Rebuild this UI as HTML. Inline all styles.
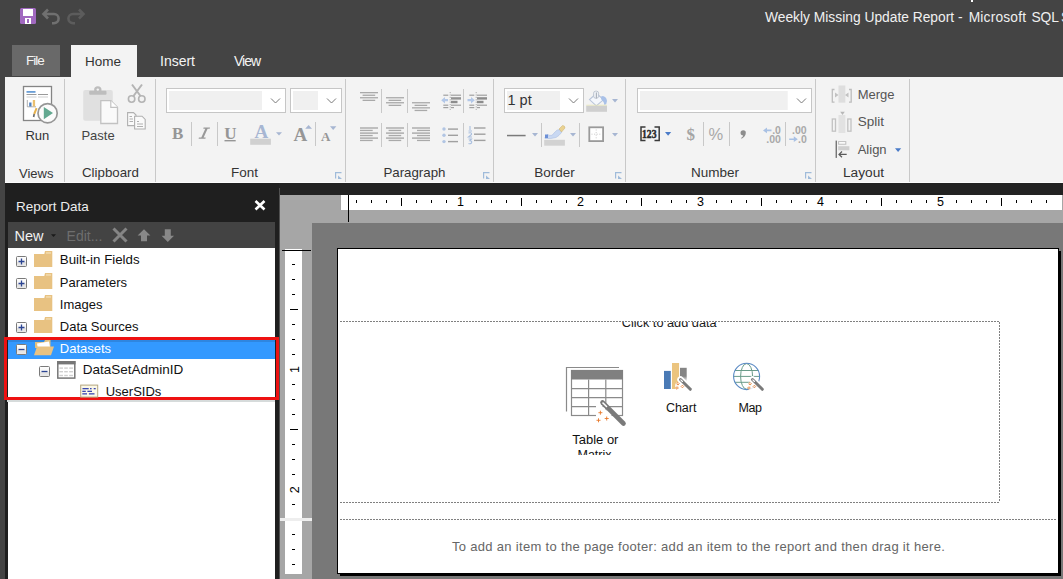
<!DOCTYPE html>
<html><head><meta charset="utf-8">
<style>
*{margin:0;padding:0;box-sizing:border-box}
html,body{width:1063px;height:579px;overflow:hidden;background:#444;font-family:"Liberation Sans",sans-serif}
.a{position:absolute}
.t{position:absolute;white-space:nowrap;line-height:1}
svg{position:absolute;overflow:visible}
</style></head><body>
<!-- title bar -->
<div class="a" style="left:0;top:0;width:1063px;height:77px;background:#444"></div>
<div class="t" style="left:765px;top:11px;font-size:13.8px;color:#f0f0f0">Weekly Missing Update Report</div>
<div class="t" style="left:958px;top:11px;font-size:13.8px;color:#f0f0f0">-</div>
<div class="t" style="left:968.7px;top:11px;font-size:13.8px;color:#f0f0f0;letter-spacing:0.17px">Microsoft</div>
<div class="t" style="left:1031.4px;top:11px;font-size:13.8px;color:#f0f0f0">SQL</div>
<div class="t" style="left:1061px;top:11px;font-size:13.8px;color:#f0f0f0">Server</div>
<div class="a" style="left:971px;top:0;width:2px;height:1.5px;background:#fff"></div>

<!-- tabs -->
<div class="a" style="left:12px;top:45px;width:48px;height:31px;background:#696969"></div>
<div class="t" style="left:26px;top:54px;font-size:13.5px;color:#f4f4f4;letter-spacing:-1px">File</div>
<div class="a" style="left:71px;top:45px;width:66px;height:33px;background:#f3f3f3"></div>
<div class="t" style="left:85px;top:54.8px;font-size:13.5px;color:#333">Home</div>
<div class="t" style="left:160px;top:54px;font-size:14px;color:#f4f4f4">Insert</div>
<div class="t" style="left:234px;top:54px;font-size:14px;color:#f4f4f4;letter-spacing:-1px">View</div>

<!-- ribbon -->
<div class="a" style="left:5px;top:77px;width:1058px;height:106px;background:#f3f3f3"></div>

<div class="a" style="left:64px;top:79px;width:1px;height:103px;background:#c8c8c8"></div>
<div class="a" style="left:155px;top:79px;width:1px;height:103px;background:#c8c8c8"></div>
<div class="a" style="left:345px;top:79px;width:1px;height:103px;background:#c8c8c8"></div>
<div class="a" style="left:493px;top:79px;width:1px;height:103px;background:#c8c8c8"></div>
<div class="a" style="left:625px;top:79px;width:1px;height:103px;background:#c8c8c8"></div>
<div class="a" style="left:815px;top:79px;width:1px;height:103px;background:#c8c8c8"></div>
<div class="a" style="left:909px;top:79px;width:1px;height:103px;background:#c8c8c8"></div>
<div class="a" style="left:5px;top:182px;width:1058px;height:1px;background:#fbfbfb"></div>
<div class="t" style="left:19px;top:166.7px;font-size:13px;color:#333;">Views</div>
<div class="t" style="left:82px;top:166.4px;font-size:13.3px;color:#333;">Clipboard</div>
<div class="t" style="left:231px;top:166.3px;font-size:13.5px;color:#333;">Font</div>
<div class="t" style="left:383.4px;top:165.7px;font-size:13.3px;color:#333;">Paragraph</div>
<div class="t" style="left:534.3px;top:166.0px;font-size:13.5px;color:#333;">Border</div>
<div class="t" style="left:691px;top:166.3px;font-size:13.5px;color:#333;">Number</div>
<div class="t" style="left:843px;top:165.8px;font-size:13.7px;color:#333;">Layout</div>
<div class="t" style="left:25.4px;top:129.0px;font-size:13px;color:#333;">Run</div>
<div class="t" style="left:81.4px;top:129.0px;font-size:13px;color:#444;">Paste</div>
<div class="t" style="left:857.7px;top:87.7px;font-size:13px;color:#555;">Merge</div>
<div class="t" style="left:857.7px;top:115.0px;font-size:13.5px;color:#555;">Split</div>
<div class="t" style="left:857.7px;top:143.0px;font-size:13px;color:#555;">Align</div>
<svg width="1063" height="579" style="left:0;top:0" viewBox="0 0 1063 579">
<!-- quick access -->
<rect x="20" y="8" width="16" height="16" rx="1.5" fill="#a169c0"/>
<rect x="23" y="9" width="10" height="7" fill="#fff"/>
<rect x="25" y="18" width="6" height="6" fill="#fff"/>
<rect x="27" y="19" width="2" height="4" fill="#a169c0"/>
<path d="M48 9.5 L43.5 14 L48 18.5 M44 14 H54 A4.6 4.6 0 0 1 54 23.2 H52" fill="none" stroke="#707070" stroke-width="2.6"/>
<path d="M79 9.5 L83.5 14 L79 18.5 M83 14 H73 A4.6 4.6 0 0 0 73 23.2 H75" fill="none" stroke="#5c5c5c" stroke-width="2.6"/>

<!-- Run icon -->
<rect x="23.5" y="86.5" width="28" height="34" fill="#fff" stroke="#858585" stroke-width="1.3"/>
<rect x="26.5" y="91" width="9" height="1.8" fill="#6a9ed6"/>
<rect x="26.5" y="94" width="10" height="1" fill="#9a9a9a"/>
<rect x="38" y="94" width="10" height="1" fill="#9a9a9a"/>
<rect x="26.5" y="96.5" width="10" height="1" fill="#cfcfcf"/>
<rect x="38" y="96.5" width="10" height="1" fill="#cfcfcf"/>
<path d="M27.3 100 V106.8 H36" fill="none" stroke="#999" stroke-width="0.8"/>
<rect x="29.2" y="102.5" width="2.3" height="4" fill="#4f80c0"/>
<rect x="32.8" y="100" width="2.3" height="6.5" fill="#ebc070"/>
<path d="M36.6 108.2 L34.2 114" stroke="#e6b24e" stroke-width="2"/><path d="M34.2 114 L33.6 117" stroke="#666" stroke-width="1.6"/>
<circle cx="47.6" cy="113.2" r="9.6" fill="#fbfbfb" stroke="#969696" stroke-width="1.7"/>
<path d="M43.8 107 L53 113 L43.8 119.2 Z" fill="#62a890"/>

<!-- Paste icon -->
<rect x="83.2" y="89.9" width="29.6" height="30.9" rx="2" fill="#e0e0e0"/>
<rect x="89.2" y="90.8" width="17.3" height="4" rx="1" fill="#bdbdbd"/>
<circle cx="97.8" cy="90" r="3.7" fill="#bdbdbd"/>
<circle cx="97.8" cy="89.6" r="1.2" fill="#f3f3f3"/>
<path d="M100.8 100.7 H110.8 L117.5 107.3 V123.5 H100.8 Z" fill="#fafafa" stroke="#c2c2c2" stroke-width="1.3"/>
<path d="M110.8 100.7 V107.3 H117.5" fill="#fff" stroke="#c2c2c2" stroke-width="1.2"/>
<!-- scissors -->
<path d="M132 84.5 L140.5 96 M142 84.5 L133.5 96" fill="none" stroke="#b4b4b4" stroke-width="2"/>
<circle cx="131.6" cy="99" r="3.2" fill="none" stroke="#b4b4b4" stroke-width="1.6"/>
<circle cx="141.8" cy="99" r="3.2" fill="none" stroke="#b4b4b4" stroke-width="1.6"/>
<!-- copy -->
<path d="M127.6 112.6 H133.5 L136 115 V125.6 H127.6 Z" fill="#fafafa" stroke="#b0b0b0" stroke-width="1.1"/>
<path d="M129.5 116.5 H132 M129.5 119 H133 M129.5 121.5 H133" stroke="#b0b0b0" stroke-width="1"/>
<path d="M134.6 116.2 H142 L145.2 119.4 V129 H134.6 Z" fill="#fafafa" stroke="#b0b0b0" stroke-width="1.1"/>
<path d="M137 121.5 H139 M137 124 H143 M137 126.5 H143" stroke="#b0b0b0" stroke-width="1"/>

<!-- Font dropdowns -->
<rect x="166.5" y="88.5" width="119" height="24" fill="#fff" stroke="#c6c6c6"/>
<rect x="169" y="91" width="93" height="19" fill="#f0f0f0"/>
<path d="M271 98.5 L275.5 103 L280 98.5" fill="none" stroke="#7a7a7a" stroke-width="1"/>
<rect x="290.5" y="88.5" width="51" height="24" fill="#fff" stroke="#c6c6c6"/>
<rect x="293" y="91" width="25" height="19" fill="#f0f0f0"/>
<path d="M327 98.5 L331.5 103 L336 98.5" fill="none" stroke="#7a7a7a" stroke-width="1"/>
<g fill="#c8c8c8">
<rect x="191" y="122" width="1" height="24"/>
<rect x="217" y="122" width="1" height="24"/>
<rect x="315" y="122" width="1" height="24"/>
</g>
<g font-family="Liberation Serif" font-weight="bold" fill="#969696">
<text x="172" y="138.8" font-size="17">B</text>

<text x="224.2" y="138.8" font-size="17">U</text>
<text x="293.5" y="141" font-size="19">A</text>
<text x="321" y="141" font-size="13">A</text>
</g>
<rect x="224.5" y="140" width="11.2" height="1.4" fill="#969696"/>
<path d="M203.6 127.4 H210 L209.7 128.7 H207.6 L203.6 137.5 H205.7 L205.4 138.8 H198.6 L198.9 137.5 H201.3 L205.3 128.7 H203.3 Z" fill="#999"/>
<text x="254.5" y="137.8" font-family="Liberation Serif" font-weight="bold" font-size="19" fill="#a7b6d2">A</text>
<rect x="250.2" y="138.7" width="20.7" height="6.1" fill="#d0d0d0"/>
<path d="M276 132.2 H282 L279 135.4 Z" fill="#a7b6d2"/>
<path d="M305.2 128.8 L308.6 125 L312 128.8 Z" fill="#a7b6d2"/>
<path d="M330 126.3 H336.4 L333.2 130 Z" fill="#a7b6d2"/>
<!-- launchers -->
<g fill="none" stroke="#9fbbda" stroke-width="1.2">
<path d="M335.6 178.5 V172.6 H341.5"/><path d="M483.6 178.5 V172.6 H489.5"/><path d="M615.6 178.5 V172.6 H621.5"/><path d="M805.6 178.5 V172.6 H811.5"/>
</g>
<g fill="#9fbbda">
<path d="M338 175.5 L342 179 H338 Z"/><path d="M486 175.5 L490 179 H486 Z"/><path d="M618 175.5 L622 179 H618 Z"/><path d="M808 175.5 L812 179 H808 Z"/>
</g>
</svg>

<svg width="1063" height="579" style="left:0;top:0" viewBox="0 0 1063 579">
<!-- paragraph -->
<g fill="#c8c8c8">
<rect x="381" y="89" width="1" height="24"/><rect x="407" y="89" width="1" height="24"/><rect x="463" y="89" width="1" height="24"/>
<rect x="381" y="123" width="1" height="24"/><rect x="407" y="123" width="1" height="24"/><rect x="463" y="123" width="1" height="24"/>
<rect x="541" y="123" width="1" height="24"/><rect x="579" y="123" width="1" height="24"/>
<rect x="703" y="122" width="1" height="24"/><rect x="729" y="122" width="1" height="24"/><rect x="785" y="122" width="1" height="24"/>
</g>
<g fill="#a9a9a9">
<rect x="360" y="92" width="18" height="1.3"/><rect x="362.6" y="94.6" width="12.6" height="1.3"/><rect x="360" y="97.1" width="18" height="1.3"/><rect x="362.6" y="99.7" width="12.6" height="1.3"/>
<rect x="386" y="97.1" width="18" height="1.3"/><rect x="388.6" y="99.7" width="12.6" height="1.3"/><rect x="386" y="102.1" width="18" height="1.3"/><rect x="388.6" y="104.7" width="12.6" height="1.3"/>
<rect x="412" y="102.1" width="18" height="1.3"/><rect x="414.6" y="104.7" width="12.6" height="1.3"/><rect x="412" y="107.2" width="18" height="1.3"/><rect x="414.6" y="109.8" width="12.6" height="1.3"/>
<!-- row2 -->
<rect x="360" y="127.3" width="18" height="1.4"/><rect x="360" y="129.8" width="12.7" height="1.3"/><rect x="360" y="132.4" width="18" height="1.4"/><rect x="360" y="134.9" width="12.7" height="1.3"/><rect x="360" y="137.4" width="18" height="1.4"/><rect x="360" y="139.8" width="12.7" height="1.3"/>
<rect x="386" y="127.3" width="18" height="1.4"/><rect x="388.6" y="129.8" width="12.6" height="1.3"/><rect x="386" y="132.4" width="18" height="1.4"/><rect x="388.6" y="134.9" width="12.6" height="1.3"/><rect x="386" y="137.4" width="18" height="1.4"/><rect x="388.6" y="139.8" width="12.6" height="1.3"/>
<rect x="412" y="127.3" width="18" height="1.4"/><rect x="417" y="129.8" width="13" height="1.3"/><rect x="412" y="132.4" width="18" height="1.4"/><rect x="417" y="134.9" width="13" height="1.3"/><rect x="412" y="137.4" width="18" height="1.4"/><rect x="417" y="139.8" width="13" height="1.3"/>
</g>
<!-- indent icons -->
<g>
<path d="M450.2 92 V111" stroke="#999" stroke-width="0.8" stroke-dasharray="1.2 1.2"/>
<rect x="443.3" y="94.6" width="5" height="1.2" fill="#a0a0a0"/><rect x="443.3" y="104.6" width="5" height="1.2" fill="#a0a0a0"/><rect x="443.3" y="107" width="5" height="1.2" fill="#a0a0a0"/>
<rect x="451" y="94.6" width="10" height="1.2" fill="#a0a0a0"/><rect x="451" y="97.2" width="10" height="2.4" fill="#939393"/><rect x="451" y="100.8" width="6.5" height="2.4" fill="#8c8c8c"/><rect x="451" y="104.6" width="10" height="1.2" fill="#a0a0a0"/><rect x="451" y="107" width="3" height="1.2" fill="#a0a0a0"/>
<path d="M441.2 100.2 L445 97 V99.1 H448 V101.3 H445 V103.4 Z" fill="#b3c8e8"/>
<path d="M476.2 92 V111" stroke="#999" stroke-width="0.8" stroke-dasharray="1.2 1.2"/>
<rect x="469.3" y="94.6" width="5" height="1.2" fill="#a0a0a0"/><rect x="469.3" y="104.6" width="5" height="1.2" fill="#a0a0a0"/><rect x="469.3" y="107" width="5" height="1.2" fill="#a0a0a0"/>
<rect x="477" y="94.6" width="10" height="1.2" fill="#a0a0a0"/><rect x="477" y="97.2" width="10" height="2.4" fill="#8c8c8c"/><rect x="477" y="100.8" width="6.5" height="2.4" fill="#8c8c8c"/><rect x="477" y="104.6" width="10" height="1.2" fill="#a0a0a0"/><rect x="477" y="107" width="3" height="1.2" fill="#a0a0a0"/>
<path d="M474.8 100.2 L471 97 V99.1 H467.5 V101.3 H471 V103.4 Z" fill="#b3c8e8"/>
</g>
<!-- bullets & numbering -->
<g fill="#b1c5e3"><circle cx="444" cy="129" r="1.7"/><circle cx="444" cy="135.3" r="1.7"/><circle cx="444" cy="141.6" r="1.7"/></g>
<g fill="#a0a0a0"><rect x="448" y="128.4" width="10" height="1.4"/><rect x="448" y="134.6" width="10" height="1.4"/><rect x="448" y="140.9" width="10" height="1.4"/>
<rect x="474" y="127.3" width="11.5" height="1.4"/><rect x="474" y="133.5" width="11.5" height="1.4"/><rect x="474" y="139.7" width="11.5" height="1.4"/></g>
<g fill="none" stroke="#a9bfdf" stroke-width="1.1"><path d="M470 126 V130 M468.5 131 H472"/><path d="M468.5 133 Q472 132 471.5 134.5 L468.5 137 H472"/><path d="M468.5 139 H471.5 L469.8 140.8 Q472.5 141 471.5 143 Q470 144.2 468.5 143.4"/></g>

<!-- Border group -->
<rect x="504.5" y="88.5" width="79" height="24" fill="#fff" stroke="#c6c6c6"/>
<rect x="507" y="91" width="53" height="19" fill="#f0f0f0"/>
<path d="M569 98.5 L573.5 103 L578 98.5" fill="none" stroke="#7a7a7a" stroke-width="1"/>
<path d="M596.3 93.5 L603.6 99.6 L596.3 105.8 L589.5 99.6 Z" fill="#f4f7fc" stroke="#b9c5da" stroke-width="1.1"/>
<rect x="593.6" y="91.2" width="5" height="7" rx="2" fill="#eef1f6" stroke="#b9c1cd" stroke-width="0.9"/><path d="M596.4 92.5 V98.5" stroke="#a9b0ba" stroke-width="1.1"/>
<path d="M601.5 96 Q606.5 96 607 101 Q607 104 604.5 105 Q603.5 101 601 99 Z" fill="#a9c1e8"/>
<rect x="586.2" y="104.8" width="20.8" height="0.8" fill="#e8e6b0"/>
<rect x="586.2" y="105.8" width="20.8" height="6" fill="#cfcfcf"/>
<path d="M612 99 H618 L615 102.6 Z" fill="#a7b6d2"/>
<rect x="507" y="134.8" width="18.6" height="1.5" fill="#7a7a7a"/>
<path d="M532 133 H538 L535 136.4 Z" fill="#a7b6d2"/>
<path d="M545 137.5 L547.5 134.5 Q552 137 554 133 Q557 129 560 129.5 L562 132 Q559 136 556 137.5 Q551 139 545 138.5 Z" fill="#c9d8f2" stroke="#a9bde2" stroke-width="0.6"/>
<path d="M545 134.5 L548 134.5 L548 138 L545 138 Z" fill="#6d90d6"/>
<path d="M559 129 L562.5 125.5 Q565 125.5 565 128 L561.5 132 Z" fill="#ead291" stroke="#c8b070" stroke-width="0.5"/>
<rect x="544.2" y="139.8" width="20.7" height="5.9" fill="#d2d2d2"/>
<path d="M570 133 H576 L573 136.4 Z" fill="#a7b6d2"/>
<rect x="589.3" y="127.3" width="13.8" height="13.8" fill="#fff" stroke="#9a9a9a" stroke-width="1.8"/>
<path d="M596.2 129.5 V139 M591.5 134.2 H601" stroke="#c4c4c4" stroke-width="0.9" stroke-dasharray="1 1.6"/>
<path d="M612 133 H618 L615 136.6 Z" fill="#a7b6d2"/>

<!-- Number group -->
<rect x="637.5" y="88.5" width="174" height="24" fill="#fff" stroke="#c6c6c6"/>
<rect x="640" y="91" width="147.7" height="19" fill="#f0f0f0"/>
<path d="M797 98.5 L801.5 103 L806 98.5" fill="none" stroke="#7a7a7a" stroke-width="1"/>
<path d="M645.5 127 H641 V140.6 H645.5 M654.5 127 H659.2 V140.6 H654.5" fill="none" stroke="#3a3a3a" stroke-width="1.5"/>
<text x="642" y="138.2" font-family="Liberation Serif" font-weight="bold" font-size="11.5" fill="#2a2a2a" stroke="#2a2a2a" stroke-width="0.45" textLength="14.5" lengthAdjust="spacingAndGlyphs">123</text>
<path d="M665 132 H671.2 L668.1 135.8 Z" fill="#4a7bc8"/>
<text x="686.6" y="139.6" font-family="Liberation Serif" font-weight="bold" font-size="17" fill="#a5a5a5" textLength="8.5" lengthAdjust="spacingAndGlyphs">$</text>
<text x="708.6" y="140.3" font-family="Liberation Sans" font-size="16.5" fill="#a9a9a9">%</text>
<path d="M743.2 130.2 A2.6 2.6 0 0 1 745.8 133 Q745.6 136.6 741.6 138.8 L741.1 137.9 Q743 136.6 743.2 135.5 A2.6 2.6 0 0 1 743.2 130.2 Z" fill="#8d8d8d"/>
<g font-family="Liberation Sans" font-weight="bold" font-size="10.5" fill="#a9a9a9">
<text x="772.2" y="134.2">.0</text><text x="766.3" y="142.8">.00</text>
<text x="792" y="134.2">.00</text><text x="798" y="142.8">.0</text>
</g>
<path d="M763 130.4 L767 127.5 V129.6 H771.5 V131.2 H767 V133.3 Z" fill="#a9c1e4"/>
<path d="M797.8 139.2 L793.8 136.3 V138.4 H789.2 V140 H793.8 V142.1 Z" fill="#a9c1e4"/>

<!-- Layout group -->
<g fill="none" stroke="#bdbdbd" stroke-width="1.3">
<path d="M834.5 89.5 H832.3 V102.2 H834.5 M849 89.5 H851.2 V102.2 H849"/>
</g>
<rect x="838.5" y="85.5" width="6.8" height="17.2" fill="#dedede"/>
<path d="M835 92.5 L838.5 95 L835 97.5 Z M848.5 92.5 L845 95 L848.5 97.5 Z" fill="#c2c2c2"/>
<g fill="none" stroke="#c2c2c2" stroke-width="1.3">
<rect x="832.3" y="119" width="3.2" height="12.2"/><rect x="847.8" y="119" width="3.2" height="12.2"/>
</g>
<rect x="838.5" y="115" width="6.8" height="18" fill="#e2e2e2"/>
<path d="M840.2 111.7 H844.8 L842.5 115 Z" fill="#b8b8b8"/>
<rect x="835.6" y="140.6" width="1.3" height="17.3" fill="#6a6a6a"/>
<rect x="838.6" y="141.6" width="7.2" height="2.6" fill="#fff" stroke="#bdbdbd" stroke-width="1"/>
<rect x="838.2" y="146.2" width="11.2" height="4.1" fill="#cfcfcf"/>
<path d="M846.7 154.4 H839 M842 151.5 L839 154.4 L842 157.3" fill="none" stroke="#5a5a5a" stroke-width="1.2"/>
<path d="M895 148.2 H901.2 L898.1 152 Z" fill="#4a7bc8"/>
</svg>

<div class="t" style="left:507.5px;top:92.5px;font-size:14.5px;color:#333">1 pt</div>
<!-- dark band -->
<div class="a" style="left:5px;top:183px;width:1058px;height:12px;background:#222"></div>

<!-- report data panel -->
<div class="a" style="left:5px;top:183px;width:274px;height:396px;background:#1f1f1f"></div>
<div class="t" style="left:16px;top:200px;font-size:13.5px;color:#ececec">Report Data</div>
<div class="a" style="left:8px;top:222px;width:267px;height:26px;background:#434343"></div>
<div class="a" style="left:8px;top:248px;width:267px;height:331px;background:#fff"></div>
<div class="a" style="left:279px;top:188px;width:1px;height:391px;background:#505050"></div>

<div class="t" style="left:14.5px;top:228.5px;font-size:14.5px;color:#f2f2f2;">New</div>
<div class="t" style="left:66.6px;top:228.9px;font-size:14px;color:#6e6e6e;">Edit...</div>
<div class="a" style="left:8px;top:340px;width:267px;height:19px;background:#3399ff"></div>
<div class="a" style="left:8px;top:340px;width:267px;height:2px;background:#2f86e0"></div>
<div class="t" style="left:59.8px;top:253.4px;font-size:13.3px;color:#111;">Built-in Fields</div>
<div class="t" style="left:59.8px;top:275.6px;font-size:13px;color:#111;">Parameters</div>
<div class="t" style="left:59.8px;top:297.7px;font-size:13px;color:#111;">Images</div>
<div class="t" style="left:59.8px;top:319.6px;font-size:13px;color:#111;">Data Sources</div>
<div class="t" style="left:59.8px;top:342.0px;font-size:13px;color:#fff;">Datasets</div>
<div class="t" style="left:82.8px;top:363.2px;font-size:13.5px;color:#111;">DataSetAdminID</div>
<div class="t" style="left:105.7px;top:385.2px;font-size:13px;color:#111;">UserSIDs</div>
<div class="a" style="left:4px;top:337px;width:275px;height:63px;border:3px solid #ee1111"></div>
<div class="a" style="left:7px;top:400px;width:268px;height:2px;background:#d6dbdb"></div>
<svg width="1063" height="579" style="left:0;top:0" viewBox="0 0 1063 579">
<!-- close x -->
<path d="M255.5 201 L264.5 209.5 M264.5 201 L255.5 209.5" stroke="#fff" stroke-width="2.6"/>
<!-- new arrow -->
<path d="M51 234.3 H56 L53.5 237 Z" fill="#1a1a1a"/>
<!-- X -->
<path d="M113.5 228.5 L126.5 241.5 M126.5 228.5 L113.5 241.5" stroke="#858585" stroke-width="3"/>
<!-- up -->
<path d="M144 229.3 L150.4 235.5 H147 V241.3 H141 V235.5 H137.6 Z" fill="#888"/>
<!-- down -->
<path d="M167.8 242 L174 235.8 H170.8 V229.3 H164.8 V235.8 H161.6 Z" fill="#888"/>
<defs>
<linearGradient id="bx" x1="0" y1="0" x2="0" y2="1"><stop offset="0" stop-color="#fff"/><stop offset="0.5" stop-color="#f4f4f4"/><stop offset="0.55" stop-color="#e2e2e2"/><stop offset="1" stop-color="#eaeaea"/></linearGradient>
</defs>
<!-- plus boxes -->
<g stroke="#7a7a7a" stroke-width="1" fill="url(#bx)">
<rect x="16.5" y="256.5" width="10" height="10" rx="1"/>
<rect x="16.5" y="278.5" width="10" height="10" rx="1"/>
<rect x="16.5" y="322.5" width="10" height="10" rx="1"/>
<rect x="16.5" y="344.5" width="10" height="10" rx="1"/>
<rect x="39.5" y="366.5" width="10" height="10" rx="1"/>
</g>
<g stroke="#2c4593" stroke-width="1.3">
<path d="M18.5 261.5 H24.5 M21.5 258.5 V264.5"/>
<path d="M18.5 283.5 H24.5 M21.5 280.5 V286.5"/>
<path d="M18.5 327.5 H24.5 M21.5 324.5 V330.5"/>
<path d="M18.5 349.5 H24.5"/>
<path d="M41.5 371.5 H47.5"/>
</g>
<!-- folders -->
<g fill="#e8c282">
<path d="M34 254 H44.3 L45 251 H52.3 V267 H34 Z"/>
<path d="M34 276 H44.3 L45 273 H52.3 V289 H34 Z"/>
<path d="M34 298 H44.3 L45 295 H52.3 V311 H34 Z"/>
<path d="M34 320 H44.3 L45 317 H52.3 V333 H34 Z"/>
</g>
<g fill="#f3dcb0">
<rect x="46" y="252.2" width="5" height="1.5"/><rect x="46" y="274.2" width="5" height="1.5"/><rect x="46" y="296.2" width="5" height="1.5"/><rect x="46" y="318.2" width="5" height="1.5"/>
</g>
<!-- open folder -->
<path d="M35 342 H44 L45 340 H50.5 V348 H35 Z" fill="#e0c080"/>
<path d="M37 343.5 L49 341.5 L50 347 L38 349 Z" fill="#fff"/>
<path d="M34 355.2 L37 346.5 H54 L51 355.2 Z" fill="#e8c282"/>
<!-- dataset icon -->
<rect x="57.8" y="361.8" width="17" height="16.3" fill="#fff" stroke="#777" stroke-width="1.5"/>
<rect x="57.1" y="361" width="18.4" height="3.4" fill="#777"/>
<g fill="#cfcfcf">
<rect x="59.4" y="367.4" width="3.6" height="1.4"/><rect x="64.2" y="367.4" width="3.6" height="1.4"/><rect x="69.2" y="367.4" width="3.8" height="1.4"/>
<rect x="59.4" y="371" width="3.6" height="1.4"/><rect x="64.2" y="371" width="3.6" height="1.4"/><rect x="69.2" y="371" width="3.8" height="1.4"/>
<rect x="59.4" y="374.8" width="3.6" height="1.4"/><rect x="64.2" y="374.8" width="3.6" height="1.4"/><rect x="69.2" y="374.8" width="3.8" height="1.4"/>
</g>
<!-- field icon -->
<rect x="80.7" y="385.1" width="17" height="12" fill="#fbf8e8" stroke="#b5a57e" stroke-width="1"/>
<g fill="#3a48b0">
<rect x="82.5" y="388" width="6.2" height="1.3"/><rect x="90" y="388" width="1.6" height="1.3"/><rect x="93.7" y="388" width="2" height="1.3"/>
<rect x="82.3" y="390.7" width="3.5" height="1.3"/><rect x="87.4" y="390.7" width="4.6" height="1.3"/>
<rect x="82.3" y="393.2" width="4.7" height="1.3"/><rect x="88.9" y="393.2" width="5.6" height="1.3"/>
</g>
</svg>

<!-- canvas -->
<div class="a" style="left:280px;top:195px;width:783px;height:384px;background:#a6a6a6"></div>
<div class="a" style="left:341px;top:195px;width:721px;height:15px;background:#fff"></div>
<div class="a" style="left:312px;top:223px;width:751px;height:356px;background:#787878"></div>
<div class="a" style="left:285px;top:249px;width:17px;height:325px;background:#fff"></div>
<div class="a" style="left:282px;top:250px;width:29px;height:1px;background:#000"></div>
<div class="a" style="left:280px;top:518px;width:32px;height:3px;background:#eee"></div>
<div class="a" style="left:348px;top:195px;width:1px;height:27px;background:#000"></div>

<svg width="1063" height="579" style="left:0;top:0" viewBox="0 0 1063 579">
<g fill="#000">
<rect x="356" y="200" width="1" height="3"/><rect x="371" y="200" width="1" height="3"/><rect x="386" y="200" width="1" height="3"/><rect x="401" y="198" width="1" height="8"/><rect x="416" y="200" width="1" height="3"/><rect x="431" y="200" width="1" height="3"/><rect x="446" y="200" width="1" height="3"/><rect x="476" y="200" width="1" height="3"/><rect x="491" y="200" width="1" height="3"/><rect x="506" y="200" width="1" height="3"/><rect x="521" y="198" width="1" height="8"/><rect x="536" y="200" width="1" height="3"/><rect x="551" y="200" width="1" height="3"/><rect x="566" y="200" width="1" height="3"/><rect x="596" y="200" width="1" height="3"/><rect x="611" y="200" width="1" height="3"/><rect x="626" y="200" width="1" height="3"/><rect x="641" y="198" width="1" height="8"/><rect x="656" y="200" width="1" height="3"/><rect x="671" y="200" width="1" height="3"/><rect x="686" y="200" width="1" height="3"/><rect x="716" y="200" width="1" height="3"/><rect x="731" y="200" width="1" height="3"/><rect x="746" y="200" width="1" height="3"/><rect x="761" y="198" width="1" height="8"/><rect x="776" y="200" width="1" height="3"/><rect x="791" y="200" width="1" height="3"/><rect x="806" y="200" width="1" height="3"/><rect x="836" y="200" width="1" height="3"/><rect x="851" y="200" width="1" height="3"/><rect x="866" y="200" width="1" height="3"/><rect x="881" y="198" width="1" height="8"/><rect x="896" y="200" width="1" height="3"/><rect x="911" y="200" width="1" height="3"/><rect x="926" y="200" width="1" height="3"/><rect x="956" y="200" width="1" height="3"/><rect x="971" y="200" width="1" height="3"/><rect x="986" y="200" width="1" height="3"/><rect x="1001" y="198" width="1" height="8"/><rect x="1016" y="200" width="1" height="3"/><rect x="1031" y="200" width="1" height="3"/><rect x="1046" y="200" width="1" height="3"/>
<rect x="292" y="264" width="3" height="1"/><rect x="292" y="279" width="3" height="1"/><rect x="292" y="294" width="3" height="1"/><rect x="290" y="309" width="8" height="1"/><rect x="292" y="324" width="3" height="1"/><rect x="292" y="339" width="3" height="1"/><rect x="292" y="354" width="3" height="1"/><rect x="292" y="384" width="3" height="1"/><rect x="292" y="399" width="3" height="1"/><rect x="292" y="414" width="3" height="1"/><rect x="290" y="429" width="8" height="1"/><rect x="292" y="444" width="3" height="1"/><rect x="292" y="459" width="3" height="1"/><rect x="292" y="474" width="3" height="1"/><rect x="292" y="504" width="3" height="1"/>
<rect x="292" y="534" width="3" height="1"/><rect x="292" y="549" width="3" height="1"/><rect x="292" y="564" width="3" height="1"/>
</g>
<g font-family="Liberation Sans" font-size="12.5" fill="#000" text-anchor="middle">
<text x="460.5" y="206">1</text><text x="580.5" y="206">2</text><text x="700.5" y="206">3</text><text x="820.5" y="206">4</text><text x="940.5" y="206">5</text>
<text x="0" y="4.5" transform="translate(294 369.5) rotate(-90)">1</text><text x="0" y="4.5" transform="translate(294 489.8) rotate(-90)">2</text>
</g>
</svg>

<!-- page -->
<div class="a" style="left:337px;top:248px;width:722px;height:326px;background:#fff;border:1px solid #000"></div>
<div class="a" style="left:1059px;top:251px;width:2px;height:325px;background:#000"></div>
<div class="a" style="left:340px;top:574px;width:721px;height:2px;background:#000"></div>

<svg width="1063" height="579" style="left:0;top:0" viewBox="0 0 1063 579">
<g stroke="#808080" stroke-width="1" stroke-dasharray="2 1" fill="none">
<path d="M340 321.5 H1000"/>
<path d="M999.5 322 V502"/>
<path d="M340 502.5 H1000"/>
<path d="M340 519.5 H1057"/>
</g>
<!-- table icon -->
<path d="M566.5 411.6 V367.5 H619" fill="none" stroke="#8a8a8a" stroke-width="1.2"/>
<rect x="571.5" y="370.5" width="51" height="45" fill="#fff" stroke="#8a8a8a" stroke-width="1.2"/>
<rect x="571" y="370" width="52" height="9.5" fill="#808080"/>
<path d="M588.6 379.5 V415.5 M605.8 379.5 V415.5 M571.5 388.6 H622.5 M571.5 397.6 H622.5 M571.5 406.7 H622.5" stroke="#8a8a8a" stroke-width="1.2"/>
<path d="M596 400 L610 414 L630 434 L620 434 L596 420 Z" fill="#fff"/>
<path d="M602.5 402.5 L623.5 423.5" stroke="#7a7a7a" stroke-width="4.6" stroke-linecap="round"/>
<path d="M603 403 L606.5 406.5" stroke="#fff" stroke-width="1.6" stroke-linecap="round"/>
<g fill="none" stroke="#e8782a" stroke-width="0.9">
<path d="M600.4 410.7 V414.7 M598.4 412.7 H602.4"/>
<path d="M598.5 418.3 V422.3 M596.5 420.3 H600.5"/>
<path d="M606.7 416.5 V420.5 M604.7 418.5 H608.7"/>
</g>
<!-- chart icon -->
<rect x="664" y="370.9" width="6.8" height="18.1" fill="#4a7ab5"/>
<rect x="672" y="363" width="7.1" height="26" fill="#ebc47f"/>
<rect x="680" y="367.8" width="6.7" height="14" fill="url(#gb)"/>
<defs><linearGradient id="gb" x1="0" y1="0" x2="0" y2="1"><stop offset="0" stop-color="#858585"/><stop offset="0.6" stop-color="#858585"/><stop offset="1" stop-color="#858585" stop-opacity="0"/></linearGradient></defs><path d="M680.5 379.5 L690.3 389.3" stroke="#fff" stroke-width="6.5" stroke-linecap="round"/><circle cx="679" cy="386" r="4" fill="#fff" opacity="0.85"/>
<path d="M680.5 379.5 L690.3 389.3" stroke="#7a7a7a" stroke-width="3" stroke-linecap="round"/>
<path d="M680.8 379.8 L682.5 381.5" stroke="#fff" stroke-width="1.1" stroke-linecap="round"/>
<g fill="none" stroke="#e8782a" stroke-width="0.8">
<path d="M678 382.4 L679.3 383.7 L678 385 L676.7 383.7 Z"/>
<path d="M677 386.7 L678.3 388 L677 389.3 L675.7 388 Z"/>
<path d="M682.4 385.2 L683.7 386.5 L682.4 387.8 L681.1 386.5 Z"/>
</g>
<!-- map icon -->
<g fill="none" stroke="#6a9c8a" stroke-width="1">
<ellipse cx="746.6" cy="376.4" rx="6" ry="12.8"/>
<path d="M735 370.5 H758.5 M733.6 376.4 H759.8 M735 382.3 H758.5"/>
</g>
<ellipse cx="746.6" cy="376.4" rx="13" ry="13.2" fill="none" stroke="#5a8ac4" stroke-width="1.1"/>
<path d="M752.5 379.5 L762.3 389.3" stroke="#fff" stroke-width="6.5" stroke-linecap="round"/><circle cx="751" cy="386" r="4" fill="#fff" opacity="0.85"/>
<path d="M752.5 379.5 L762.3 389.3" stroke="#7a7a7a" stroke-width="3" stroke-linecap="round"/>
<path d="M752.8 379.8 L754.5 381.5" stroke="#fff" stroke-width="1.1" stroke-linecap="round"/>
<g fill="none" stroke="#e8782a" stroke-width="0.8">
<path d="M750 382.4 L751.3 383.7 L750 385 L748.7 383.7 Z"/>
<path d="M749 386.7 L750.3 388 L749 389.3 L747.7 388 Z"/>
<path d="M754.4 385.2 L755.7 386.5 L754.4 387.8 L753.1 386.5 Z"/>
</g>
</svg>
<div class="a" style="left:600px;top:322px;width:140px;height:10px;overflow:hidden">
<div class="t" style="left:21.7px;top:-5.4px;font-size:12.75px;color:#1a1a1a">Click to add data</div>
</div>
<div class="t" style="left:572.2px;top:432.9px;font-size:13px;color:#111">Table or</div>
<div class="a" style="left:560px;top:448px;width:70px;height:7px;overflow:hidden">
<div class="t" style="left:17.5px;top:0.9px;font-size:12.5px;color:#111">Matrix</div>
</div>
<div class="t" style="left:665.9px;top:402.3px;font-size:12.5px;color:#111">Chart</div>
<div class="t" style="left:738.6px;top:402.3px;font-size:12.5px;color:#111;letter-spacing:-0.5px">Map</div>
<div class="t" style="left:451.9px;top:539.9px;font-size:13px;color:#666;letter-spacing:0.318px">To add an item to the page footer: add an item to the report and then drag it here.</div>

</body></html>
